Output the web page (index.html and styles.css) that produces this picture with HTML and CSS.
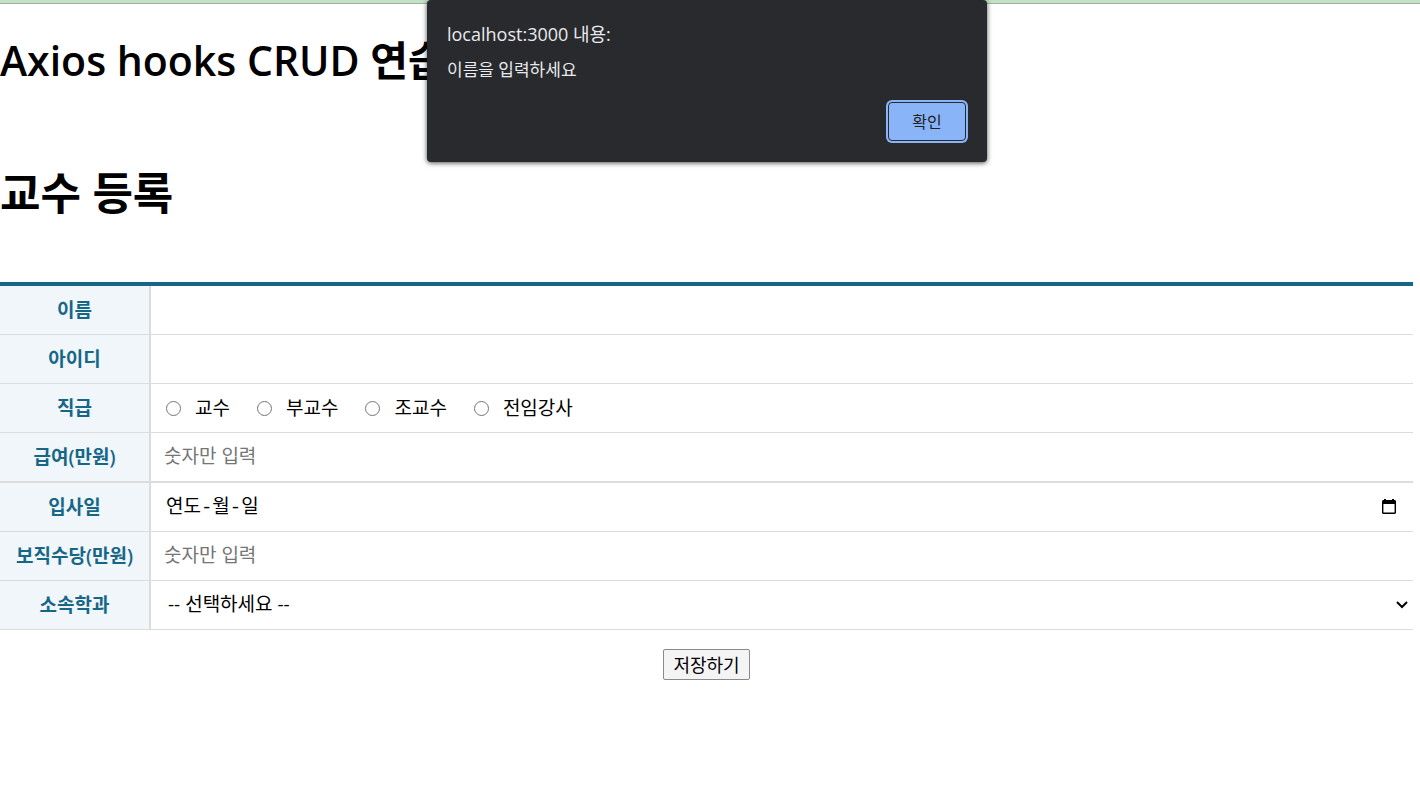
FILE: index.html
```html
<!DOCTYPE html>
<html lang="ko">
<head>
<meta charset="utf-8">
<meta name="viewport" content="width=device-width, initial-scale=1">
<title>교수 등록</title>
<link rel="stylesheet" href="styles.css">
</head>
<body>
<div class="top-strip"></div>
<main class="page">
  <h1 class="title">Axios hooks CRUD 연습</h1>
  <h1 class="title title-sub">교수 등록</h1>
  <form class="form">
    <table class="form-table">
      <tbody>
        <tr>
          <th scope="row"><label for="name">이름</label></th>
          <td><input class="field" type="text" id="name"></td>
        </tr>
        <tr>
          <th scope="row"><label for="userid">아이디</label></th>
          <td><input class="field" type="text" id="userid"></td>
        </tr>
        <tr>
          <th scope="row">직급</th>
          <td>
            <div class="radios">
              <label class="radio"><input type="radio" name="position">교수</label>
              <label class="radio"><input type="radio" name="position">부교수</label>
              <label class="radio"><input type="radio" name="position">조교수</label>
              <label class="radio"><input type="radio" name="position">전임강사</label>
            </div>
          </td>
        </tr>
        <tr class="row-thick">
          <th scope="row"><label for="sal">급여(만원)</label></th>
          <td><input class="field" type="text" id="sal" placeholder="숫자만 입력"></td>
        </tr>
        <tr>
          <th scope="row"><label for="hiredate">입사일</label></th>
          <td>
            <div class="date">
              <input class="field field-date" type="text" id="hiredate" placeholder="연도-월-일">
              <button class="date-button" type="button" aria-label="날짜 선택">
                <svg width="14" height="16" viewBox="0 0 14 16"><path d="M2 0h2v1h6V0h2v1h1l1 1v12l-1 1H1l-1-1V2l1-1h1zM1.4 5v8.6h11.2V5z" fill="#000" fill-rule="evenodd"/></svg>
              </button>
            </div>
          </td>
        </tr>
        <tr>
          <th scope="row"><label for="comm">보직수당(만원)</label></th>
          <td><input class="field" type="text" id="comm" placeholder="숫자만 입력"></td>
        </tr>
        <tr>
          <th scope="row"><label for="dept">소속학과</label></th>
          <td>
            <div class="select-wrap">
              <select class="field field-select" id="dept"><option>-- 선택하세요 --</option></select>
              <svg class="chevron" width="12" height="8" viewBox="0 0 12 8"><path d="M1 1l5 5 5-5" fill="none" stroke="#000" stroke-width="2"/></svg>
            </div>
          </td>
        </tr>
      </tbody>
    </table>
    <div class="actions"><button class="save" type="submit">저장하기</button></div>
  </form>
  <div class="alert" role="alertdialog" aria-labelledby="alert-title" aria-describedby="alert-text">
    <div class="alert-title" id="alert-title">localhost:3000 내용:</div>
    <p class="alert-text" id="alert-text">이름을 입력하세요</p>
    <div class="alert-actions"><button class="alert-ok" type="button">확인</button></div>
  </div>
</main>
</body>
</html>
```

FILE: styles.css
```css
* {
  box-sizing: border-box;
}

body {
  margin: 0;
  background: #fff;
  color: #000;
  font-family: "Open Sans", "Noto Sans CJK KR", sans-serif;
  font-size: 19px;
}

button,
input,
select {
  font-family: inherit;
  color: inherit;
}

.top-strip {
  height: 4px;
  background: #c5e1c5;
  border-bottom: 1px solid #9ab59e;
}

.page {
  padding-right: 7px;
}

.title {
  margin: 0;
  padding-top: 24px;
  font-size: 41px;
  font-weight: 600;
  line-height: 64px;
}

.title-sub {
  padding-top: 69px;
  padding-bottom: 57px;
  font-size: 44px;
}

.form-table {
  width: 100%;
  table-layout: fixed;
  border-spacing: 0;
  border-top: 4px solid #166688;
}

.form-table th,
.form-table td {
  height: 49px;
  padding: 0;
  border-bottom: 1px solid #dcdcdc;
}

.form-table th {
  width: 151px;
  background: #f0f6fa;
  border-right: 2px solid #dcdcdc;
  color: #166688;
  font-weight: 600;
  line-height: 28px;
  text-align: center;
}

.form-table .row-thick th,
.form-table .row-thick td {
  height: 50px;
  border-bottom-width: 2px;
}

.field {
  display: block;
  width: 100%;
  height: 44px;
  padding: 0 13px 3px;
  border: 0;
  outline: 0;
  background: transparent;
  font-size: 19px;
}

.field::placeholder {
  color: #757575;
  opacity: 1;
}

.field-date {
  padding: 2px 15px 0;
  font-family: "Liberation Mono", "Noto Sans CJK KR", monospace;
}

.field-date::placeholder {
  color: #000;
}

.radios {
  display: flex;
  gap: 27px;
  padding-left: 15px;
}

.radio {
  display: flex;
  align-items: center;
  gap: 14px;
  line-height: 28px;
}

.radio input {
  width: 15px;
  height: 15px;
  margin: 0;
  appearance: none;
  border: 1px solid #767676;
  border-radius: 50%;
}

.radio input:checked {
  background: #166688;
}

.date {
  display: flex;
  align-items: center;
  padding-right: 17px;
}

.date-button {
  display: flex;
  padding: 0;
  border: 0;
  background: none;
}

.select-wrap {
  display: grid;
  align-items: center;
}

.field-select,
.chevron {
  grid-area: 1 / 1;
}

.field-select {
  appearance: none;
  padding: 0 17px 2px;
}

.chevron {
  justify-self: end;
  margin-right: 5px;
  pointer-events: none;
}

.actions {
  display: flex;
  justify-content: center;
  padding-top: 19px;
}

.save {
  height: 31px;
  padding: 0 9px;
  border: 1px solid #8a8a8a;
  border-radius: 2px;
  background: #f4f4f4;
  font-size: 18px;
  line-height: 28px;
}

.alert {
  position: absolute;
  top: 0;
  left: calc(50% - 283px);
  width: 560px;
  padding: 20px 21px 21px 20px;
  border-radius: 4px;
  background: #292a2d;
  box-shadow: 0 1px 5px rgba(0, 0, 0, 0.7);
  color: #e8eaed;
}

.alert-title {
  font-size: 18px;
  line-height: 28px;
}

.alert-text {
  margin: 8px 0 0;
  font-size: 17px;
  line-height: 28px;
}

.alert-actions {
  display: flex;
  justify-content: flex-end;
  padding-top: 18px;
}

.alert-ok {
  width: 78px;
  height: 39px;
  border: 1px solid #292a2d;
  border-radius: 4px;
  background: #8ab4f8;
  box-shadow: 0 0 0 2px #8ab4f8;
  color: #202124;
  font-size: 16px;
  line-height: 24px;
}
```
